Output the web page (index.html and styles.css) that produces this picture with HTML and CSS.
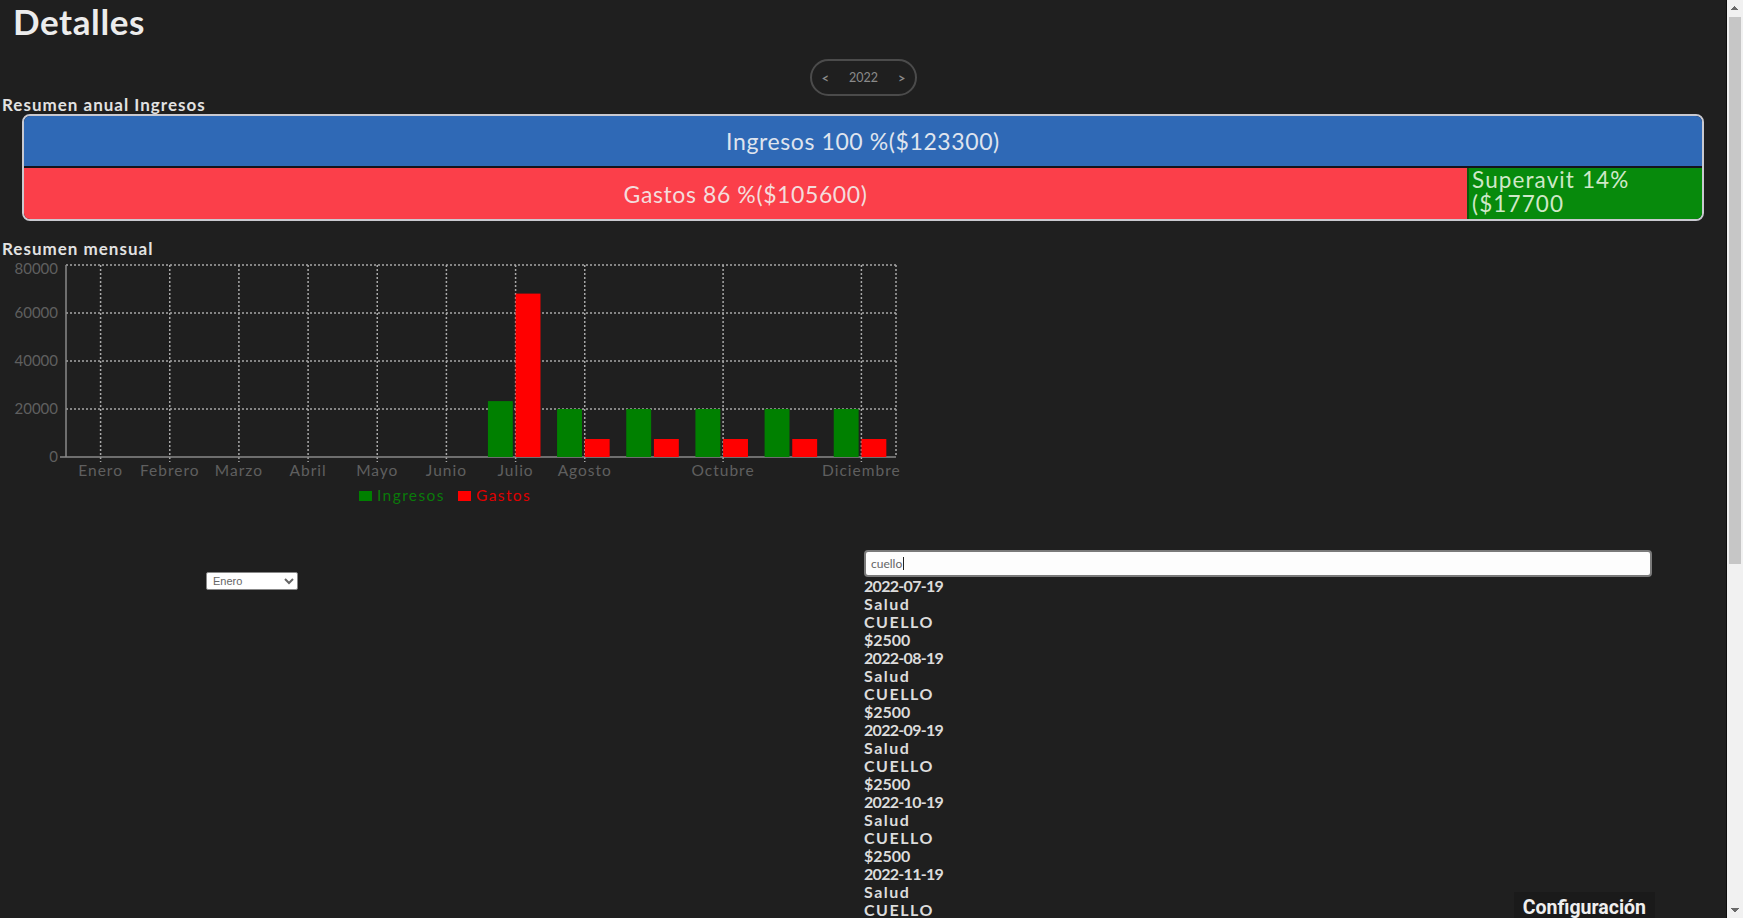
FILE: index.html
```html
<!DOCTYPE html>
<html lang="es">
<head>
<meta charset="utf-8">
<title>Detalles</title>
<link rel="stylesheet" href="styles.css">
</head>
<body>
<main class="page">
  <h1 class="title">Detalles</h1>

  <div class="year-row">
    <div class="year-pill">
      <span class="year-arrow">&lt;</span>
      <span class="year">2022</span>
      <span class="year-arrow">&gt;</span>
    </div>
  </div>

  <h2 class="section-label">Resumen anual Ingresos</h2>
  <div class="annual">
    <div class="annual-row row-income">
      <div class="seg seg-income" style="width:100%">Ingresos 100 %($123300)</div>
    </div>
    <div class="annual-row row-expense">
      <div class="seg seg-expense" style="width:86%">Gastos 86 %($105600)</div>
      <div class="seg seg-surplus" style="width:14%">Superavit 14%<br>($17700</div>
    </div>
  </div>

  <h2 class="section-label monthly-label">Resumen mensual</h2>
  <div class="chart">
    <svg class="chart-svg" width="910" height="260" viewBox="0 0 910 260">
      <g class="grid">
        <line x1="66" y1="7" x2="896" y2="7"/>
        <line x1="66" y1="55" x2="896" y2="55"/>
        <line x1="66" y1="103" x2="896" y2="103"/>
        <line x1="66" y1="151" x2="896" y2="151"/>
        <line x1="100.6" y1="7" x2="100.6" y2="204"/>
        <line x1="169.75" y1="7" x2="169.75" y2="204"/>
        <line x1="238.9" y1="7" x2="238.9" y2="204"/>
        <line x1="308.1" y1="7" x2="308.1" y2="204"/>
        <line x1="377.25" y1="7" x2="377.25" y2="204"/>
        <line x1="446.4" y1="7" x2="446.4" y2="204"/>
        <line x1="515.6" y1="7" x2="515.6" y2="204"/>
        <line x1="584.75" y1="7" x2="584.75" y2="204"/>
        <line x1="723.1" y1="7" x2="723.1" y2="204"/>
        <line x1="861.4" y1="7" x2="861.4" y2="204"/>
        <line x1="896" y1="7" x2="896" y2="199"/>
      </g>
      <g class="axis">
        <line x1="66" y1="7" x2="66" y2="199"/>
        <line x1="60" y1="199" x2="896" y2="199"/>
      </g>
      <g class="bars-in">
        <rect x="487.92" y="143.1" width="24.9" height="55.9"/>
        <rect x="557.08" y="151" width="24.9" height="48"/>
        <rect x="626.25" y="151" width="24.9" height="48"/>
        <rect x="695.42" y="151" width="24.9" height="48"/>
        <rect x="764.58" y="151" width="24.9" height="48"/>
        <rect x="833.75" y="151" width="24.9" height="48"/>
      </g>
      <g class="bars-out">
        <rect x="515.58" y="35.6" width="24.9" height="163.4"/>
        <rect x="584.75" y="181" width="24.9" height="18"/>
        <rect x="653.92" y="181" width="24.9" height="18"/>
        <rect x="723.08" y="181" width="24.9" height="18"/>
        <rect x="792.25" y="181" width="24.9" height="18"/>
        <rect x="861.42" y="181" width="24.9" height="18"/>
      </g>
      <g class="y-labels">
        <text x="58" y="12">80000</text>
        <text x="58" y="56">60000</text>
        <text x="58" y="104">40000</text>
        <text x="58" y="152">20000</text>
        <text x="58" y="200">0</text>
      </g>
      <g class="x-labels">
        <text x="100.6" y="214">Enero</text>
        <text x="169.75" y="214">Febrero</text>
        <text x="238.9" y="214">Marzo</text>
        <text x="308.1" y="214">Abril</text>
        <text x="377.25" y="214">Mayo</text>
        <text x="446.4" y="214">Junio</text>
        <text x="515.6" y="214">Julio</text>
        <text x="584.75" y="214">Agosto</text>
        <text x="723.1" y="214">Octubre</text>
        <text x="861.4" y="214">Diciembre</text>
      </g>
      <g class="legend">
        <rect class="legend-in" x="359" y="233" width="13" height="10"/>
        <text class="legend-in-text" x="377" y="239">Ingresos</text>
        <rect class="legend-out" x="458" y="233" width="13" height="10"/>
        <text class="legend-out-text" x="476" y="239">Gastos</text>
      </g>
    </svg>
  </div>

  <section class="lower">
    <div class="filter-col">
      <select class="month-select">
        <option>Enero</option>
        <option>Febrero</option>
        <option>Marzo</option>
        <option>Abril</option>
        <option>Mayo</option>
        <option>Junio</option>
        <option>Julio</option>
        <option>Agosto</option>
        <option>Septiembre</option>
        <option>Octubre</option>
        <option>Noviembre</option>
        <option>Diciembre</option>
      </select>
    </div>
    <div class="search-col">
      <div class="search-box"><span class="search-text">cuello</span><span class="caret"></span></div>
      <ul class="results">
        <li class="date">2022-07-19</li><li>Salud</li><li>CUELLO</li><li class="num">$2500</li>
        <li class="date">2022-08-19</li><li>Salud</li><li>CUELLO</li><li class="num">$2500</li>
        <li class="date">2022-09-19</li><li>Salud</li><li>CUELLO</li><li class="num">$2500</li>
        <li class="date">2022-10-19</li><li>Salud</li><li>CUELLO</li><li class="num">$2500</li>
        <li class="date">2022-11-19</li><li>Salud</li><li>CUELLO</li>
      </ul>
    </div>
  </section>
</main>
<div class="scrollbar" aria-hidden="true">
  <div class="sb-button sb-up"></div>
  <div class="sb-track">
    <div class="sb-thumb"></div>
  </div>
  <div class="sb-button sb-down"></div>
</div>
<div class="config">Configuración</div>
</body>
</html>
```

FILE: styles.css
```css
html {
  background: #1f1f1f;
}
body {
  margin: 0;
  height: 100vh;
  overflow: hidden;
  display: flex;
  background: #1f1f1f;
  color: #e4e4e4;
  font-family: "Lato", "Noto Sans", sans-serif;
}
.page {
  flex: 1;
  min-width: 0;
  overflow: hidden;
}
.scrollbar {
  width: 17px;
  flex: none;
  display: flex;
  flex-direction: column;
  background: #f1f1f1;
  border-left: 1px solid #0e0e0e;
  box-sizing: border-box;
}
.sb-button {
  height: 16px;
  flex: none;
  background-color: #f1f1f1;
  background-repeat: no-repeat;
  background-size: 4px 4px, 4px 4px;
  background-position: 4px 6px, 8px 6px;
}
.sb-up {
  background-image:
    linear-gradient(to bottom right, transparent 50%, #6a6a6a 50%),
    linear-gradient(to bottom left, transparent 50%, #6a6a6a 50%);
}
.sb-down {
  background-image:
    linear-gradient(to top right, transparent 50%, #6a6a6a 50%),
    linear-gradient(to top left, transparent 50%, #6a6a6a 50%);
}
.sb-track {
  flex: 1;
  padding: 1px 2px 0 2px;
}
.sb-thumb {
  height: 547px;
  background: #c6c6c6;
}
.title {
  margin: 0;
  padding: 0 13px;
  font-size: 35px;
  line-height: 42px;
  font-weight: 700;
  color: #ececec;
  letter-spacing: 0.6px;
}
.year-row {
  display: flex;
  justify-content: center;
  margin-top: 17px;
}
.year-pill {
  width: 107px;
  height: 37px;
  box-sizing: border-box;
  border: 2px solid #4b4b4b;
  border-radius: 20px;
  display: flex;
  align-items: center;
  justify-content: space-between;
  padding: 0 9px 0 10px;
  color: #8a8a8a;
  font-size: 12.5px;
  font-weight: 400;
}
.year-arrow {
  font-size: 13px;
  font-weight: 700;
}
.section-label {
  margin: 0;
  padding-left: 2px;
  font-size: 17px;
  line-height: 18px;
  font-weight: 700;
  color: #e2e2e2;
  letter-spacing: 1px;
}
.monthly-label {
  margin-top: 19px;
}
.annual {
  margin: 0 22px 0 22px;
  border: 2px solid #c9c9d0;
  border-radius: 8px;
  overflow: hidden;
  background: #14141c;
  display: flex;
  flex-direction: column;
  gap: 2px;
}
.annual-row {
  display: flex;
}
.row-income {
  height: 50px;
}
.row-expense {
  height: 51px;
}
.seg {
  box-sizing: border-box;
  font-size: 23px;
  font-weight: 400;
  letter-spacing: 0.6px;
}
.seg-income {
  background: #2f69b6;
  color: #dfe4ee;
  display: flex;
  align-items: center;
  justify-content: center;
}
.seg-expense {
  background: #fb3f4a;
  color: #f4dcdc;
  display: flex;
  align-items: center;
  justify-content: center;
}
.seg-surplus {
  background: #078a0c;
  color: #cfe8c8;
  font-size: 22.5px;
  line-height: 24px;
  padding: 0 0 0 3px;
  border-left: 2px solid #0c5a0c;
  letter-spacing: 1.1px;
}
.chart {
  height: 260px;
}
.chart-svg {
  display: block;
  font-family: "Lato", "Noto Sans", sans-serif;
}
.grid line {
  stroke: #a8a8a8;
  stroke-width: 1.5;
  stroke-dasharray: 2 2;
}
.axis line {
  stroke: #8a8a8a;
  stroke-width: 1.5;
}
.bars-in rect {
  fill: #008000;
}
.bars-out rect {
  fill: #ff0000;
}
.y-labels text {
  fill: #5f5f5f;
  font-size: 15px;
  text-anchor: end;
  dominant-baseline: middle;
}
.x-labels text {
  fill: #5f5f5f;
  font-size: 15.5px;
  letter-spacing: 1px;
  text-anchor: middle;
  dominant-baseline: middle;
}
.legend text {
  font-size: 15.5px;
  letter-spacing: 1.4px;
  dominant-baseline: middle;
}
.legend-in {
  fill: #008000;
}
.legend-out {
  fill: #ff0000;
}
.legend-in-text {
  fill: #0a7a0a;
}
.legend-out-text {
  fill: #e00000;
}
.lower {
  display: grid;
  grid-template-columns: 864px 788px;
  margin-top: 32px;
}
.filter-col {
  padding: 22px 0 0 206px;
}
.month-select {
  display: block;
  width: 92px;
  height: 18px;
  font-size: 11px;
  font-family: "Liberation Sans", sans-serif;
  color: #666;
  background: #fff;
  border: 1px solid #888;
  border-radius: 2px;
  padding: 0 2px;
}
.search-box {
  height: 27px;
  box-sizing: border-box;
  border: 2px solid #7a7a7a;
  border-radius: 4px;
  background: #fdfdfd;
  display: flex;
  align-items: center;
  padding-left: 5px;
  font-size: 12px;
  color: #666;
}
.caret {
  width: 1px;
  height: 13px;
  background: #222;
  margin-left: 1px;
}
.results {
  list-style: none;
  margin: 0;
  padding: 0;
  font-size: 16px;
  line-height: 18px;
  font-weight: 700;
  color: #dcdcdc;
  letter-spacing: 1.5px;
}
.results .date {
  letter-spacing: -0.7px;
}
.results .num {
  letter-spacing: 0;
}
.config {
  position: fixed;
  right: 88px;
  bottom: -8px;
  background: #1a1a1a;
  color: #efefef;
  font-family: "Roboto", sans-serif;
  font-weight: 700;
  font-size: 19.5px;
  line-height: 20px;
  padding: 6px 9px 8px;
}
```
